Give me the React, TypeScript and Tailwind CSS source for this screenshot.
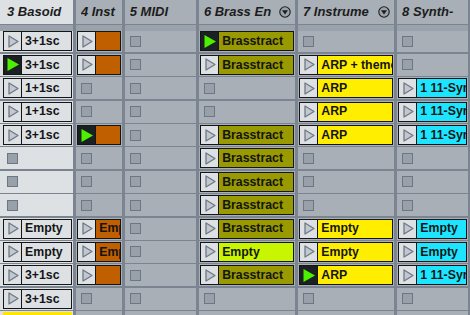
import React from "react";

type Clip = {
  text?: string;
  color: string;
  playing?: boolean;
};

type Column = {
  title: string;
  width: string;
  light?: boolean;
  menu?: boolean;
  cells: (Clip | null)[];
};

const LIGHT = "bg-[#dde1e4]";
const ORANGE = "bg-[#bf5f00]";
const OLIVE = "bg-[#999900]";
const LIME = "bg-[#c8f500]";
const YELLOW = "bg-[#ffee00]";
const CYAN = "bg-[#1ee5ff]";

const e = null;

const COLUMNS: Column[] = [
  {
    title: "3 Basoid",
    width: "w-[73.3px]",
    light: true,
    cells: [
      { text: "3+1sc", color: LIGHT },
      { text: "3+1sc", color: LIGHT, playing: true },
      { text: "1+1sc", color: LIGHT },
      { text: "1+1sc", color: LIGHT },
      { text: "3+1sc", color: LIGHT },
      e,
      e,
      e,
      { text: "Empty", color: LIGHT },
      { text: "Empty", color: LIGHT },
      { text: "3+1sc", color: LIGHT },
      { text: "3+1sc", color: LIGHT },
      { color: "yellow-bar" },
    ],
  },
  {
    title: "4 Inst",
    width: "w-[46.3px]",
    cells: [
      { color: ORANGE },
      { color: ORANGE },
      e,
      e,
      { color: ORANGE, playing: true },
      e,
      e,
      e,
      { text: "Empty", color: ORANGE },
      { text: "Empty", color: ORANGE },
      { color: ORANGE },
      e,
      e,
    ],
  },
  {
    title: "5 MIDI",
    width: "w-[71.5px]",
    cells: [e, e, e, e, e, e, e, e, e, e, e, e, e],
  },
  {
    title: "6 Brass En",
    width: "w-[96.5px]",
    menu: true,
    cells: [
      { text: "Brasstract", color: OLIVE, playing: true },
      { text: "Brasstract", color: OLIVE },
      e,
      e,
      { text: "Brasstract", color: OLIVE },
      { text: "Brasstract", color: OLIVE },
      { text: "Brasstract", color: OLIVE },
      { text: "Brasstract", color: OLIVE },
      { text: "Brasstract", color: OLIVE },
      { text: "Empty", color: LIME },
      { text: "Brasstract", color: OLIVE },
      e,
      e,
    ],
  },
  {
    title: "7 Instrume",
    width: "w-[96.5px]",
    menu: true,
    cells: [
      e,
      { text: "ARP + theme", color: YELLOW },
      { text: "ARP", color: YELLOW },
      { text: "ARP", color: YELLOW },
      { text: "ARP", color: YELLOW },
      e,
      e,
      e,
      { text: "Empty", color: YELLOW },
      { text: "Empty", color: YELLOW },
      { text: "ARP", color: YELLOW, playing: true },
      e,
      e,
    ],
  },
  {
    title: "8 Synth-",
    width: "w-[71px]",
    cells: [
      e,
      e,
      { text: "1 11-Synth", color: CYAN },
      { text: "1 11-Synth", color: CYAN },
      { text: "1 11-Synth", color: CYAN },
      e,
      e,
      e,
      { text: "Empty", color: CYAN },
      { text: "Empty", color: CYAN },
      { text: "1 11-Synth", color: CYAN },
      e,
      e,
    ],
  },
];

const PlayIcon = ({ playing }: { playing?: boolean }) =>
  playing ? (
    <svg width="12" height="13" viewBox="0 0 12 13">
      <path d="M0.5 0 L12 6.5 L0.5 13 Z" fill="#4cf000" />
    </svg>
  ) : (
    <svg width="11" height="13" viewBox="0 0 11 13">
      <path
        d="M1 1 L10 6.5 L1 12 Z"
        fill="#c2c8ce"
        stroke="#6e7886"
        strokeWidth="1.3"
        strokeLinejoin="round"
      />
    </svg>
  );

const MenuIcon = () => (
  <svg width="12" height="12" viewBox="0 0 12 12" className="shrink-0">
    <circle cx="6" cy="6" r="5.2" fill="#9ba3ac" stroke="#1e1e1e" strokeWidth="1.1" />
    <path d="M3 4.2 L9 4.2 L6 8.6 Z" fill="#1e1e1e" />
  </svg>
);

const ClipSlot = ({ clip, first }: { clip: Clip; first?: boolean }) => {
  if (clip.color === "yellow-bar") {
    return <div className="ml-[3px] mr-[1px] mt-[0.5px] h-[20px] flex-1 bg-[#ffe600]" />;
  }
  return (
    <div
      className={`flex h-[20px] flex-1 overflow-hidden border border-[#151515] ${
        first ? "ml-[3px] mr-[1px]" : "mx-[1.3px]"
      }`}
    >
      <div
        className={`flex w-[18px] shrink-0 items-center justify-center border-r border-[#151515] pl-[1px] ${
          clip.playing ? "bg-[#1b2023]" : "bg-[#dde1e4]"
        }`}
      >
        <PlayIcon playing={clip.playing} />
      </div>
      <div
        className={`flex min-w-0 flex-1 items-center overflow-hidden whitespace-nowrap pl-[3px] text-[12.3px] font-bold leading-none text-[#141414] ${clip.color}`}
      >
        {clip.text}
      </div>
    </div>
  );
};

const EmptySlot = ({ first }: { first?: boolean }) => (
  <div
    className={`h-[11px] w-[11px] border border-[#6d7784] bg-[#98a0a9] ${
      first ? "ml-[7px]" : "ml-[5px]"
    }`}
  />
);

export default function App() {
  return (
    <div
      className="flex h-[315px] w-[470px] gap-[2.6px] overflow-hidden bg-[#7b8592]"
      style={{ fontFamily: '"Liberation Sans", Arial, sans-serif' }}
    >
      {COLUMNS.map((col, ci) => (
        <div key={col.title} className={`flex shrink-0 flex-col ${col.width}`}>
          <div
            className={`flex h-[23.5px] shrink-0 items-center gap-[3px] overflow-hidden whitespace-nowrap pr-[4px] ${
              ci === 0 ? "pl-[7px]" : "pl-[5px]"
            } ${col.light ? "bg-[#dde1e4]" : "bg-[#a8afb6]"}`}
          >
            <span className="flex-1 overflow-hidden text-[13px] font-bold italic leading-none text-[#1c1c1c]">
              {col.title}
            </span>
            {col.menu && <MenuIcon />}
          </div>
          <div className="mt-[1.5px] h-[5.5px] shrink-0 bg-[#9aa2ab]" />
          <div className="flex flex-col gap-[1.5px]">
            {col.cells.map((cell, ri) => (
              <div
                key={ri}
                className={`flex h-[21.9px] shrink-0 items-center ${
                  col.light ? "bg-[#dde1e4]" : "bg-[#a8afb6]"
                }`}
              >
                {cell ? <ClipSlot clip={cell} first={ci === 0} /> : <EmptySlot first={ci === 0} />}
              </div>
            ))}
          </div>
        </div>
      ))}
    </div>
  );
}
